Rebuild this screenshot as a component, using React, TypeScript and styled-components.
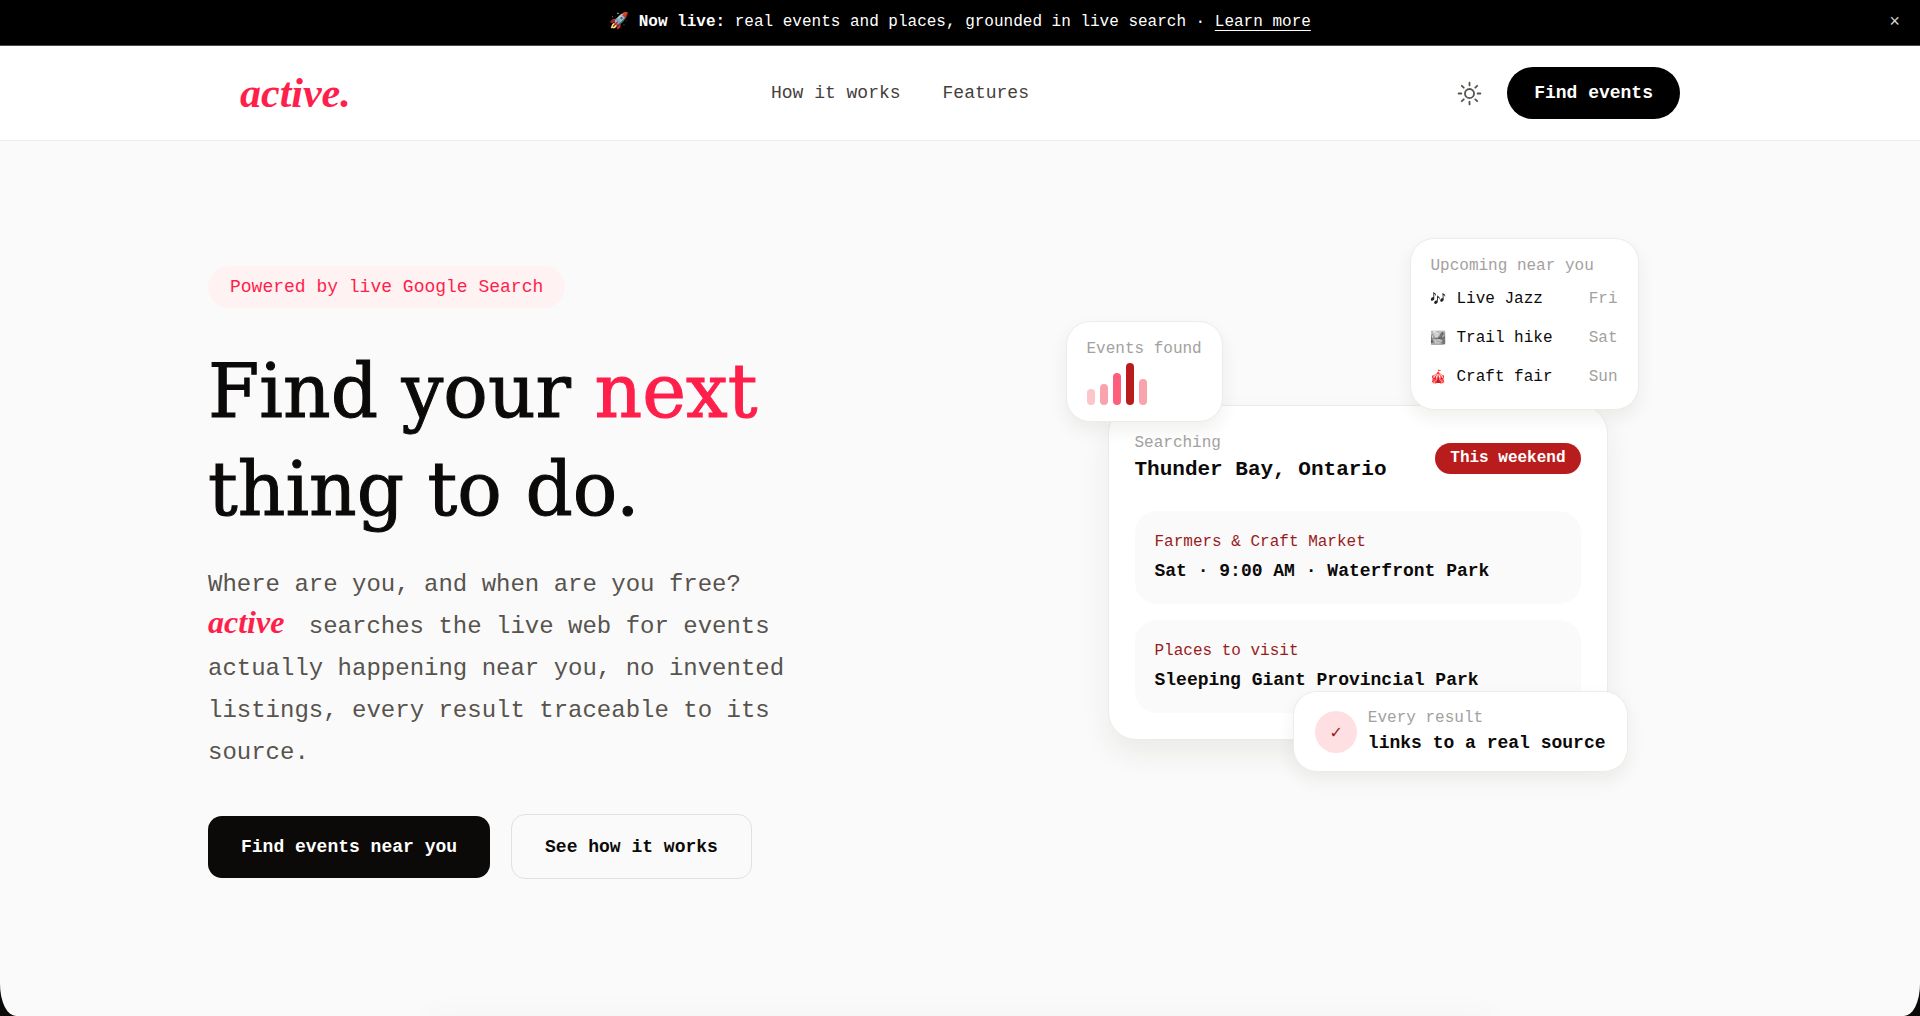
import React from "react";
import styled, { createGlobalStyle } from "styled-components";

const mono = `"Liberation Mono", "Noto Color Emoji", monospace`;
const slab = `"DejaVu Serif", serif`;
const script = `"Liberation Serif", cursive`;

const color = {
  ink: "#0c0a09",
  body: "#57534e",
  muted: "#a3a19e",
  brand: "#ff1f4b",
  red: "#b91c1c",
  deepRed: "#991b1b",
  line: "#ececeb",
  canvas: "#fafafa",
};

const GlobalStyle = createGlobalStyle`
  *, *::before, *::after { box-sizing: border-box; }
  body { margin: 0; background: ${color.ink}; font-family: ${mono}; color: ${color.ink}; }
  h1, p, ul { margin: 0; padding: 0; }
  ul { list-style: none; }
  button { font-family: inherit; cursor: pointer; }
`;

const Page = styled.div`
  display: flex;
  flex-direction: column;
  min-height: 100vh;
  overflow: hidden;
  background: ${color.canvas};
  border-radius: 0 0 16px 16px / 0 0 32px 32px;
`;

const Banner = styled.div`
  display: grid;
  grid-template-columns: 1fr auto 1fr;
  align-items: center;
  min-height: 46px;
  padding: 0 20px;
  border-bottom: 1px solid #4a4a4a;
  background: #000;
  color: #fff;
  font-size: 16px;
  line-height: 23px;
`;

const BannerText = styled.p`
  grid-column: 2;
`;

const BannerLink = styled.a`
  color: inherit;
  text-underline-offset: 4px;
`;

const CloseButton = styled.button`
  justify-self: end;
  padding: 0;
  border: 0;
  background: none;
  color: #d6d3d1;
  font-size: 18px;
  line-height: 23px;
`;

const Header = styled.header`
  border-bottom: 1px solid ${color.line};
  background: #fff;
`;

const HeaderInner = styled.div`
  display: flex;
  align-items: center;
  justify-content: space-between;
  max-width: 1504px;
  min-height: 94px;
  margin: 0 auto;
  padding: 0 32px;
`;

const Logo = styled.a`
  color: ${color.brand};
  font: italic bold 42px/52px ${script};
  text-decoration: none;
`;

const Nav = styled.nav`
  display: flex;
  gap: 42px;
`;

const NavLink = styled.a`
  color: #44403c;
  font-size: 18px;
  line-height: 26px;
  text-decoration: none;
`;

const HeaderActions = styled.div`
  display: flex;
  align-items: center;
  gap: 18px;
`;

const IconButton = styled.button`
  display: grid;
  place-items: center;
  width: 40px;
  height: 40px;
  padding: 0;
  border: 0;
  background: none;
  color: ${color.body};
`;

const PillButton = styled.button`
  height: 52px;
  padding: 0 27px;
  border: 0;
  border-radius: 26px;
  background: #000;
  color: #fff;
  font-size: 18px;
  font-weight: bold;
`;

const Hero = styled.main`
  display: grid;
  grid-template-columns: 1fr 1fr;
  align-items: center;
  gap: 86px;
  width: 100%;
  max-width: 1504px;
  margin: 0 auto;
  padding: 125px 0;
`;

const Intro = styled.section`
  display: flex;
  flex-direction: column;
  align-items: flex-start;
  max-width: 600px;
`;

const Badge = styled.span`
  padding: 8px 22px;
  border-radius: 21px;
  background: #fef2f2;
  color: ${color.brand};
  font-size: 18px;
  line-height: 26px;
`;

const Title = styled.h1`
  margin-top: 34px;
  font: normal 74px/98px ${slab};
  -webkit-text-stroke-width: 1px;
`;

const Accent = styled.span`
  color: ${color.brand};
`;

const Lead = styled.p`
  margin-top: 26px;
  color: ${color.body};
  font-size: 24px;
  line-height: 42px;
`;

const InlineLogo = styled.span`
  margin-right: 10px;
  color: ${color.brand};
  font: italic bold 32px/24px ${script};
`;

const Actions = styled.div`
  display: flex;
  align-items: center;
  gap: 21px;
  margin-top: 40px;
`;

const ActionButton = styled.button<{ $outline?: boolean }>`
  height: ${(p) => (p.$outline ? 65 : 62)}px;
  padding: 0 33px;
  border: ${(p) => (p.$outline ? "1px solid #e2e1e0" : "0")};
  border-radius: 14px;
  background: ${(p) => (p.$outline ? "transparent" : color.ink)};
  color: ${(p) => (p.$outline ? color.ink : "#fff")};
  font-size: 18px;
  font-weight: bold;
`;

const Stage = styled.section`
  position: relative;
  justify-self: center;
  width: 100%;
  max-width: 500px;
`;

const SearchCard = styled.div`
  display: flex;
  flex-direction: column;
  gap: 16px;
  padding: 26px;
  border: 1px solid ${color.line};
  border-radius: 28px;
  background: #fff;
  box-shadow: 0 14px 28px rgba(40, 36, 20, 0.07);
`;

const SearchHead = styled.div`
  display: flex;
  align-items: center;
  justify-content: space-between;
  margin-bottom: 10px;
`;

const Label = styled.p<{ $tone?: string }>`
  color: ${(p) => p.$tone ?? color.muted};
  font-size: 16px;
  line-height: 23px;
`;

const Place = styled.p`
  font-size: 21px;
  font-weight: bold;
  line-height: 30px;
`;

const Strong = styled.p`
  font-size: 18px;
  font-weight: bold;
  line-height: 26px;
`;

const Tag = styled.span`
  padding: 4px 15px;
  border-radius: 16px;
  background: ${color.red};
  color: #fff;
  font-size: 16px;
  font-weight: bold;
  line-height: 23px;
`;

const Tile = styled.article`
  display: grid;
  gap: 4px;
  padding: 20px;
  border-radius: 22px;
  background: ${color.canvas};
`;

const FloatingCard = styled.div`
  position: absolute;
  border: 1px solid ${color.line};
  border-radius: 24px;
  background: #fff;
  box-shadow: 0 8px 18px rgba(40, 36, 20, 0.07);
`;

const CountCard = styled(FloatingCard)`
  top: -84px;
  left: -42px;
  padding: 16px 20px;
`;

const Bars = styled.div`
  display: flex;
  align-items: flex-end;
  gap: 5px;
  margin-top: 2px;
`;

const Bar = styled.span<{ $height: number; $fill: string }>`
  width: 8px;
  height: ${(p) => p.$height}px;
  border-radius: 4px;
  background: ${(p) => p.$fill};
`;

const UpcomingCard = styled(FloatingCard)`
  top: -167px;
  right: -31px;
  min-width: 229px;
  padding: 16px 20px 20px;
`;

const UpcomingList = styled.ul`
  display: grid;
  gap: 16px;
  margin-top: 10px;
`;

const UpcomingRow = styled.li`
  display: flex;
  gap: 10px;
  font-size: 16px;
  line-height: 23px;
`;

const Emoji = styled.span<{ $filter: string }>`
  width: 16px;
  font-size: 13px;
  filter: ${(p) => p.$filter};
`;

const Day = styled.span`
  margin-left: auto;
  color: ${color.muted};
`;

const SourceCard = styled(FloatingCard)`
  right: -20px;
  bottom: -32px;
  display: flex;
  align-items: center;
  gap: 11px;
  padding: 15px 21px;
  white-space: nowrap;
`;

const Check = styled.span`
  display: grid;
  place-items: center;
  width: 42px;
  height: 42px;
  border-radius: 50%;
  background: #ffe0e2;
  color: ${color.deepRed};
  font-size: 18px;
`;

const NextPanel = styled.div`
  width: 55%;
  height: 8px;
  margin: auto auto -8px;
  box-shadow: 0 0 24px 8px rgba(0, 0, 0, 0.02);
`;

const bars = [
  { height: 16, fill: "#fbc5ca" },
  { height: 21, fill: "#f9a3ad" },
  { height: 32, fill: "#ff5f7c" },
  { height: 42, fill: color.red },
  { height: 26, fill: "#f9a3ad" },
];

const upcoming = [
  { icon: "🎶", name: "Live Jazz", day: "Fri", filter: "grayscale(1) brightness(0.3)" },
  { icon: "🏞️", name: "Trail hike", day: "Sat", filter: "grayscale(1)" },
  { icon: "🎪", name: "Craft fair", day: "Sun", filter: "hue-rotate(-20deg) saturate(1.3)" },
];

const SunIcon = () => (
  <svg width="29" height="29" viewBox="0 0 24 24" fill="none" stroke="currentColor" strokeWidth="1.5" strokeLinecap="round" aria-hidden="true">
    <circle cx="12" cy="12" r="3.75" />
    <path d="M12 3v2.25M18.364 5.636l-1.591 1.591M21 12h-2.25M18.364 18.364l-1.591-1.591M12 18.75V21M7.227 16.773l-1.591 1.591M5.25 12H3M7.227 7.227 5.636 5.636" />
  </svg>
);

export default function App() {
  return (
    <>
      <GlobalStyle />
      <Page>
        <Banner>
          <BannerText>
            🚀 <b>Now live:</b> real events and places, grounded in live search ·{" "}
            <BannerLink href="#how">Learn more</BannerLink>
          </BannerText>
          <CloseButton aria-label="Dismiss">×</CloseButton>
        </Banner>

        <Header>
          <HeaderInner>
            <Logo href="#">active.</Logo>
            <Nav>
              <NavLink href="#how">How it works</NavLink>
              <NavLink href="#features">Features</NavLink>
            </Nav>
            <HeaderActions>
              <IconButton aria-label="Toggle theme">
                <SunIcon />
              </IconButton>
              <PillButton>Find events</PillButton>
            </HeaderActions>
          </HeaderInner>
        </Header>

        <Hero>
          <Intro>
            <Badge>Powered by live Google Search</Badge>
            <Title>
              Find your <Accent>next</Accent> thing to do.
            </Title>
            <Lead>
              Where are you, and when are you free? <InlineLogo>active</InlineLogo> searches the live web for events
              actually happening near you, no invented listings, every result traceable to its source.
            </Lead>
            <Actions>
              <ActionButton>Find events near you</ActionButton>
              <ActionButton $outline>See how it works</ActionButton>
            </Actions>
          </Intro>

          <Stage>
            <SearchCard>
              <SearchHead>
                <div>
                  <Label>Searching</Label>
                  <Place>Thunder Bay, Ontario</Place>
                </div>
                <Tag>This weekend</Tag>
              </SearchHead>
              <Tile>
                <Label $tone={color.deepRed}>Farmers &amp; Craft Market</Label>
                <Strong>Sat · 9:00 AM · Waterfront Park</Strong>
              </Tile>
              <Tile>
                <Label $tone={color.deepRed}>Places to visit</Label>
                <Strong>Sleeping Giant Provincial Park</Strong>
              </Tile>
            </SearchCard>

            <CountCard>
              <Label>Events found</Label>
              <Bars>
                {bars.map((bar, i) => (
                  <Bar key={i} $height={bar.height} $fill={bar.fill} />
                ))}
              </Bars>
            </CountCard>

            <UpcomingCard>
              <Label>Upcoming near you</Label>
              <UpcomingList>
                {upcoming.map((item) => (
                  <UpcomingRow key={item.name}>
                    <Emoji $filter={item.filter}>{item.icon}</Emoji>
                    <span>{item.name}</span>
                    <Day>{item.day}</Day>
                  </UpcomingRow>
                ))}
              </UpcomingList>
            </UpcomingCard>

            <SourceCard>
              <Check>✓</Check>
              <div>
                <Label>Every result</Label>
                <Strong>links to a real source</Strong>
              </div>
            </SourceCard>
          </Stage>
        </Hero>
        <NextPanel />
      </Page>
    </>
  );
}
